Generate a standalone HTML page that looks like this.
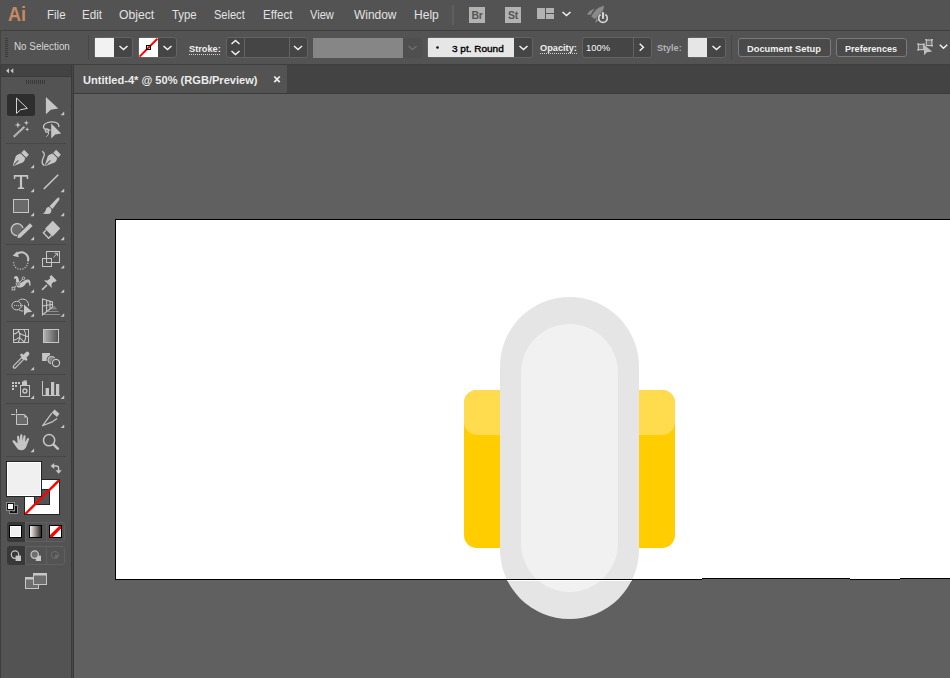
<!DOCTYPE html>
<html>
<head>
<meta charset="utf-8">
<title>Untitled-4* @ 50% (RGB/Preview)</title>
<style>
*{box-sizing:border-box;margin:0;padding:0}
html,body{width:950px;height:678px;overflow:hidden;background:#535353;font-family:"Liberation Sans",sans-serif;color:#dcdcdc}
.abs{position:absolute}
#app{position:relative;width:950px;height:678px;overflow:hidden;background:#535353}
/* menu bar */
#menubar{left:0;top:0;width:950px;height:30px;background:#535353}
.mi{position:absolute;transform-origin:0 0;top:7px;font-size:13px;line-height:16px;color:#e2e2e2;white-space:nowrap}
#ailogo{left:8px;top:2px;font-size:20.5px;line-height:24px;font-weight:bold;color:#c98a63;transform-origin:0 0;transform:scaleX(0.88)}
/* control bar */
#ctrl{left:0;top:30px;width:950px;height:35px;background:#535353;border-top:1px solid #3e3e3e;border-bottom:1px solid #3f3f3f;border-left:1px solid #444}
.ct{position:absolute;font-size:10px;line-height:13px;color:#e0e0e0;white-space:nowrap}
/* tab strip */
#tabstrip{left:72px;top:65px;width:878px;height:29px;background:#434343;border-bottom:1px solid #3a3a3a}
#tab{left:74px;top:65px;width:213px;height:28px;background:#535353}
#tabtxt{top:73px;font-size:11px;line-height:14px;font-weight:bold;color:#ececec;white-space:nowrap}
/* canvas */
#canvas{left:74px;top:94px;width:876px;height:584px;background:#606060;overflow:hidden}
/* toolbar */
#tbhead{left:0;top:65px;width:71px;height:12px;background:#434343;border-bottom:1px solid #3b3b3b}
#tb{left:0;top:77px;width:72px;height:601px;background:#535353}
#tbsep{left:71px;top:65px;width:3px;height:613px;background:linear-gradient(to right,#3a3a3a 0,#3a3a3a 1px,#474747 1px,#474747 2px,#3a3a3a 2px,#3a3a3a 3px)}

/* control widgets */
.grp{position:absolute;top:37px;height:21px;border:1px solid #636363;border-radius:3px;background:#454545;overflow:hidden}
.sw{position:absolute;top:38px;height:19px}
.chev{position:absolute;width:9px;height:6px}
.lbl{position:absolute;top:41px;font-size:9.6px;line-height:13px;font-weight:bold;color:#efefef;white-space:nowrap}
.btn{position:absolute;top:38px;height:19px;border:1px solid #7b7b7b;border-radius:3px;background:#4a4a4a;font-size:10.5px;line-height:17px;font-weight:bold;color:#f0f0f0;text-align:center;white-space:nowrap}
.bt{position:absolute;top:42px;font-size:9.6px;line-height:13px;font-weight:bold;color:#f0f0f0;white-space:nowrap}
.vsep{position:absolute;width:1px;background:#444}
.appbox{position:absolute;top:7px;width:16px;height:16px;background:#b2b2b2;color:#555;font-size:10.5px;line-height:16px;font-weight:bold;text-align:center;letter-spacing:-0.3px}
</style>
</head>
<body>
<div id="app">
  <div id="menubar" class="abs">
    <div id="ailogo" class="abs">Ai</div>
    <div class="mi" style="left:47.1px;transform:scaleX(0.885)">File</div>
    <div class="mi" style="left:82.2px;transform:scaleX(0.895)">Edit</div>
    <div class="mi" style="left:118.8px;transform:scaleX(0.935)">Object</div>
    <div class="mi" style="left:171.5px;transform:scaleX(0.876)">Type</div>
    <div class="mi" style="left:213.9px;transform:scaleX(0.850)">Select</div>
    <div class="mi" style="left:263.0px;transform:scaleX(0.893)">Effect</div>
    <div class="mi" style="left:310.1px;transform:scaleX(0.855)">View</div>
    <div class="mi" style="left:353.7px;transform:scaleX(0.919)">Window</div>
    <div class="mi" style="left:414.1px;transform:scaleX(0.927)">Help</div>
  </div>
  <div id="ctrl" class="abs"></div>
  <!-- control bar widgets -->
  <svg class="abs" style="left:0;top:0" width="950" height="64" viewBox="0 0 950 64">
    <!-- menubar separator and app icons -->
    <rect x="452" y="5" width="2" height="20" fill="#5f5f5f"/>
    <g fill="#b2b2b2">
      <rect x="537" y="8" width="8" height="11"/>
      <rect x="546" y="8" width="8" height="5"/>
      <rect x="546" y="14" width="8" height="5"/>
    </g>
    <path d="M562.5 12 L566.5 15.5 L570.5 12" fill="none" stroke="#f0f0f0" stroke-width="1.6"/>
    <!-- rocket -->
    <g fill="#8b8b8b">
      <path d="M604.1 5.8 C599 6.6 594.4 10.4 591.4 16.4 L594.6 18.9 C600 16.2 603.6 11.6 604.1 5.8 Z"/>
      <path d="M594.8 8.8 C591.4 9.6 588.6 11.6 586.9 14.4 L590.9 14.7 C591.8 12.4 593 10.6 594.8 8.8 Z"/>
      <path d="M596.4 18.4 L595 23 C597 22.2 598.6 20.4 599 17.6 Z"/>
    </g>
    <circle cx="603" cy="18.1" r="5.6" fill="#535353"/>
    <path d="M600.6 14.5 A4.3 4.3 0 1 0 605.4 14.5" fill="none" stroke="#d6d6d6" stroke-width="1.6"/>
    <rect x="601.3" y="11.6" width="3.4" height="7.8" fill="#535353"/>
    <rect x="601.9" y="12.2" width="2.2" height="6.6" fill="#d6d6d6"/>
    <!-- grip -->
    <g fill="#3b3b3b">
      <rect x="5" y="38" width="3" height="1"/><rect x="5" y="40" width="3" height="1"/><rect x="5" y="42" width="3" height="1"/><rect x="5" y="44" width="3" height="1"/><rect x="5" y="46" width="3" height="1"/><rect x="5" y="48" width="3" height="1"/><rect x="5" y="50" width="3" height="1"/><rect x="5" y="52" width="3" height="1"/><rect x="5" y="54" width="3" height="1"/><rect x="5" y="56" width="3" height="1"/>
    </g>
    <rect x="88" y="35" width="1" height="25" fill="#474747"/>
    <rect x="731" y="35" width="1" height="25" fill="#474747"/>
  </svg>
  <div class="appbox" style="left:469px">Br</div>
  <div class="appbox" style="left:505px">St</div>
  <div class="ct" style="left:14.2px;top:40px;color:#d6d6d6;transform-origin:0 0;transform:scaleX(0.985)">No Selection</div>
  <!-- fill -->
  <div class="grp" style="left:94px;width:39px"></div>
  <div class="sw" style="left:95px;width:19px;background:#f2f2f2"></div>
  <!-- stroke -->
  <div class="grp" style="left:138px;width:39px"></div>
  <div class="sw" style="left:139px;width:19px;background:#fff"></div>
  <div class="lbl" style="left:188.5px;transform-origin:0 0;transform:scaleX(0.960);top:42px">Stroke:</div>
  <div class="grp" style="left:226px;width:82px"></div>
  <!-- variable width (disabled) -->
  <div class="sw" style="left:313px;width:90px;top:38px;height:20px;background:#868686"></div>
  <div class="sw" style="left:403px;width:19px;top:38px;height:20px;background:#4f4f4f"></div>
  <!-- brush -->
  <div class="grp" style="left:427px;width:106px"></div>
  <div class="sw" style="left:428px;width:86px;background:#e6e6e6"></div>
  <div class="ct" style="left:452.0px;top:42px;color:#000;-webkit-text-stroke:0.35px #000;font-weight:normal;transform-origin:0 0;transform:scaleX(1.043);font-size:9.6px">3 pt. Round</div>
  <div class="lbl" style="left:539.7px;transform-origin:0 0;transform:scaleX(0.960);top:41px">Opacity:</div>
  <div class="grp" style="left:582px;width:70px"></div>
  <div class="ct" style="left:585.7px;top:41px;color:#f8f8f8;transform-origin:0 0;transform:scaleX(0.980);font-size:9.6px">100%</div>
  <div class="ct" style="left:657.1px;top:41px;color:#b4b4b4;font-weight:bold;transform-origin:0 0;transform:scaleX(0.944);font-size:9.6px">Style:</div>
  <div class="grp" style="left:687px;width:39px"></div>
  <div class="sw" style="left:688px;width:19px;background:#e6e6e6"></div>
  <div class="btn" style="left:738px;width:93px"></div>
  <div class="bt" style="left:747.4px;transform-origin:0 0;transform:scaleX(0.969)">Document Setup</div>
  <div class="btn" style="left:836px;width:71px"></div>
  <div class="bt" style="left:845.3px;transform-origin:0 0;transform:scaleX(0.948)">Preferences</div>
  <svg class="abs" style="left:0;top:30px" width="950" height="34" viewBox="0 30 950 34">
    <g fill="none" stroke="#f2f2f2" stroke-width="1.5">
      <path d="M119.5 46 L123.5 49.5 L127.5 46"/>
      <path d="M163.5 46 L167.5 49.5 L171.5 46"/>
      <path d="M231.5 44 L235.5 40.5 L239.5 44"/>
      <path d="M231.5 51 L235.5 54.5 L239.5 51"/>
      <path d="M294 46 L298 49.5 L302 46"/>
      <path d="M519.5 46 L523.5 49.5 L527.5 46"/>
      <path d="M639.7 43.8 L643.4 47.3 L639.7 50.8"/>
      <path d="M712.5 46 L716.5 49.5 L720.5 46"/>
      <path d="M939.8 44.8 L943.5 48.2 L947.2 44.8"/>
    </g>
    <path d="M408.5 46 L412.5 49.5 L416.5 46" fill="none" stroke="#6e6e6e" stroke-width="1.5"/>
    <path d="M189 54.5 H220" stroke="#d2d2d2" stroke-width="1" stroke-dasharray="1 1"/>
    <path d="M540 53.5 H577" stroke="#d2d2d2" stroke-width="1" stroke-dasharray="1 1"/>
    <!-- stroke none swatch -->
    <path d="M139.6 56.6 L157.4 38.8" stroke="#ff0000" stroke-width="2"/>
    <rect x="146.5" y="45.5" width="4" height="4" fill="none" stroke="#000" stroke-width="1"/>
    <!-- spinner/field dividers -->
    <rect x="244" y="38" width="1" height="19" fill="#636363"/>
    <rect x="289" y="38" width="1" height="19" fill="#636363"/>
    <rect x="633" y="38" width="1" height="19" fill="#636363"/>
    <circle cx="437.5" cy="47.5" r="1.3" fill="#111"/>
    <!-- selection icon -->
    <g fill="#6e6e6e" stroke="#d0d0d0" stroke-width="1">
      <rect x="918.3" y="44.3" width="5.4" height="5.4"/>
      <rect x="926.3" y="40" width="5.6" height="5.6"/>
    </g>
    <g fill="#d0d0d0">
      <rect x="917.3" y="43.3" width="1.4" height="1.4"/><rect x="923.3" y="43.3" width="1.4" height="1.4"/><rect x="917.3" y="49.3" width="1.4" height="1.4"/>
      <rect x="925.3" y="39" width="1.4" height="1.4"/><rect x="931.5" y="39" width="1.4" height="1.4"/><rect x="931.5" y="45.2" width="1.4" height="1.4"/>
    </g>
    <path d="M924 44.8 L924 55.3 L927 52.2 L932.2 51.4 Z" fill="#bdbdbd"/>
  </svg>
  <div id="tabstrip" class="abs"></div>
  <div id="tab" class="abs"></div>
  <div id="tabtxt" class="abs" style="left:83.2px;transform-origin:0 0;transform:scaleX(1.007)">Untitled-4* @ 50% (RGB/Preview)</div>
  <svg class="abs" style="left:270px;top:72px" width="14" height="14" viewBox="270 72 14 14"><path d="M274.3 76.5 L279.7 82.1 M279.7 76.5 L274.3 82.1" stroke="#ededed" stroke-width="1.8" fill="none"/></svg>
  <div id="canvas" class="abs">
    <svg class="abs" style="left:0;top:0" width="876" height="584" viewBox="74 94 876 584">
      <rect x="115.5" y="219.5" width="840" height="360" fill="#ffffff" stroke="#000000" stroke-width="1"/>
      <rect x="464" y="390" width="211" height="158" rx="13" fill="#ffcd00"/>
      <rect x="464" y="390" width="211" height="45" rx="13" fill="#ffdb4d"/>
      <rect x="500" y="297" width="139" height="322" rx="69.5" fill="#e5e5e5"/>
      <rect x="521" y="324" width="97" height="268" rx="48.5" fill="#f1f1f1"/>
      <rect x="115" y="579" width="587" height="1" fill="#000"/>
      <rect x="702" y="578" width="148" height="1" fill="#000"/>
      <rect x="850" y="579" width="50" height="1" fill="#000"/>
      <rect x="900" y="578" width="50" height="1" fill="#000"/>
      <rect x="702" y="579" width="148" height="1" fill="#606060"/>
      <rect x="900" y="579" width="50" height="1" fill="#606060"/>
      <rect x="507" y="580" width="125" height="1" fill="#ffffff"/>
    </svg>
  </div>
  <div id="tbhead" class="abs"></div>
  <div id="tb" class="abs"></div>
  <div id="tbsep" class="abs"></div>
  <svg id="tbsvg" class="abs" style="left:0;top:65px" width="74" height="613" viewBox="0 65 74 613">
    <style>.f{fill:#c6c6c6}.s{fill:none;stroke:#c6c6c6;stroke-width:1}.s15{fill:none;stroke:#c6c6c6;stroke-width:1.5}.s2{fill:none;stroke:#c6c6c6;stroke-width:2}.d{fill:#6a6a6a;stroke:#c6c6c6;stroke-width:1}</style>
    <rect x="0" y="65" width="1" height="613" fill="#3e3e3e"/>
    <!-- collapse chevrons -->
    <path class="f" d="M9 68.3 L9 73.3 L6 70.8 Z M13.3 68.3 L13.3 73.3 L10.3 70.8 Z"/>
    <rect x="6" y="143" width="60" height="1" fill="#474747"/><rect x="6" y="244" width="60" height="1" fill="#474747"/><rect x="6" y="321" width="60" height="1" fill="#474747"/><rect x="6" y="374" width="60" height="1" fill="#474747"/><rect x="6" y="403" width="60" height="1" fill="#474747"/><rect x="6" y="456" width="60" height="1" fill="#474747"/>
    <rect x="26" y="80" width="1" height="4" fill="#3a3a3a"/><rect x="28" y="80" width="1" height="4" fill="#3a3a3a"/><rect x="30" y="80" width="1" height="4" fill="#3a3a3a"/><rect x="32" y="80" width="1" height="4" fill="#3a3a3a"/><rect x="34" y="80" width="1" height="4" fill="#3a3a3a"/><rect x="36" y="80" width="1" height="4" fill="#3a3a3a"/><rect x="38" y="80" width="1" height="4" fill="#3a3a3a"/><rect x="40" y="80" width="1" height="4" fill="#3a3a3a"/><rect x="42" y="80" width="1" height="4" fill="#3a3a3a"/><rect x="44" y="80" width="1" height="4" fill="#3a3a3a"/>
    <path class="f" d="M64.2 115.2 h-3.6 l3.6 -3.6 Z M34.1 168.2 h-3.6 l3.6 -3.6 Z M34.1 192.2 h-3.6 l3.6 -3.6 Z M64.2 192.2 h-3.6 l3.6 -3.6 Z M34.1 216.2 h-3.6 l3.6 -3.6 Z M64.2 216.2 h-3.6 l3.6 -3.6 Z M34.1 240.2 h-3.6 l3.6 -3.6 Z M64.2 240.2 h-3.6 l3.6 -3.6 Z M34.1 268.6 h-3.6 l3.6 -3.6 Z M64.2 268.6 h-3.6 l3.6 -3.6 Z M34.1 292.8 h-3.6 l3.6 -3.6 Z M64.2 292.8 h-3.6 l3.6 -3.6 Z M34.1 316.8 h-3.6 l3.6 -3.6 Z M64.2 316.8 h-3.6 l3.6 -3.6 Z M34.1 370.3 h-3.6 l3.6 -3.6 Z M34.1 398.9 h-3.6 l3.6 -3.6 Z M64.2 398.9 h-3.6 l3.6 -3.6 Z M64.2 428.1 h-3.6 l3.6 -3.6 Z M34.1 452.2 h-3.6 l3.6 -3.6 Z"/>
    <!-- row 1: selection (active) / direct selection -->
    <rect x="7" y="94" width="28" height="22" rx="2.5" fill="#2e2e2e"/>
    <path d="M16.5 98 L16.5 113.4 L20.6 109.7 L27.4 108.4 Z" fill="none" stroke="#d4d4d4" stroke-width="1" stroke-linejoin="miter"/>
    <path class="f" d="M45.9 97 L45.9 114.2 L50.8 109.7 L58.3 108.4 Z"/>
    <!-- row 2: magic wand / lasso -->
    <path d="M13.8 136.7 L24.4 126.8" stroke="#c6c6c6" stroke-width="2.1" stroke-dasharray="1.7 0.3" fill="none"/>
    <path class="f" d="M17.9 121.8 L18.7 124.2 L21.2 125 L18.7 125.8 L17.9 128.2 L17.1 125.8 L14.6 125 L17.1 124.2 Z"/>
    <path class="f" d="M26.3 120.2 L27 122.2 L29 122.8 L27 123.5 L26.3 125.5 L25.6 123.5 L23.6 122.8 L25.6 122.2 Z"/>
    <path class="f" d="M27.2 127.2 L27.8 128.7 L29.3 129.3 L27.8 129.9 L27.2 131.4 L26.6 129.9 L25.1 129.3 L26.6 128.7 Z"/>
    <path d="M50.5 130.2 C45 130.4 42.8 128.2 43.6 125.8 C44.6 122.6 50 121.4 54.4 122.2 C57.8 122.8 59.6 124.8 58.6 127" fill="none" stroke="#c6c6c6" stroke-width="1.3"/>
    <circle cx="46.9" cy="130.6" r="1.7" fill="none" stroke="#c6c6c6" stroke-width="1.2"/>
    <path class="s" d="M48.3 131.8 C49 133.6 48.2 135.6 46.2 136.6"/>
    <path class="f" d="M51.2 123.6 L51.2 138.4 L55.2 134.4 L61.2 133.6 Z"/>
    <!-- row 3: pen / curvature -->
    <g id="pen">
      <path class="f" stroke="#c6c6c6" stroke-width="0.8" stroke-linejoin="round" d="M24.2 150.3 L28.5 154.8 L26.1 157.2 L21.7 152.7 Z"/>
      <path class="f" d="M20.7 153.5 L25.2 158 C24.8 160 24 161.6 22.7 162.6 L14.2 165.8 C13.3 166 12.8 165.4 13 164.6 L15.9 156.1 C16.9 154.9 18.6 154 20.7 153.5 Z"/>
      <path d="M13.9 164.8 L18.4 160.4" stroke="#535353" stroke-width="1.1" fill="none"/>
    </g>
    <g transform="translate(32 0)">
      <path class="f" stroke="#c6c6c6" stroke-width="0.8" stroke-linejoin="round" d="M24.2 150.3 L28.5 154.8 L26.1 157.2 L21.7 152.7 Z"/>
      <path class="f" d="M20.7 153.5 L25.2 158 C24.8 160 24 161.6 22.7 162.6 L14.2 165.8 C13.3 166 12.8 165.4 13 164.6 L15.9 156.1 C16.9 154.9 18.6 154 20.7 153.5 Z"/>
      <path d="M13.9 164.8 L18.4 160.4" stroke="#535353" stroke-width="1.1" fill="none"/>
    </g>
    <path d="M42.1 151.4 C44.6 152.6 44.8 154.6 43.6 157 C42.2 159.8 40.6 163.6 44.4 165.6" fill="none" stroke="#c6c6c6" stroke-width="1.3"/>
    <!-- row 4: type / line -->
    <path class="f" d="M13.8 175 H28.2 V179 H26.7 V176.7 H22.1 V187.6 H24.1 V189.1 H17.9 V187.6 H19.9 V176.7 H15.3 V179 H13.8 Z"/>
    <path d="M43.8 189 L58.2 174.8" stroke="#c6c6c6" stroke-width="1.6" fill="none"/>
    <!-- row 5: rectangle / paintbrush -->
    <rect class="d" x="13.5" y="199.5" width="15" height="13"/>
    <path class="f" d="M58.9 197.6 Q59.9 198.6 59.2 200 L52.4 208.9 L49.5 206.3 L57.2 198.2 Q58 197.4 58.9 197.6 Z"/>
    <path class="f" d="M48.9 207.1 C50.2 207.5 51.2 208.8 51.4 210.2 C51.5 212.4 50 213.8 48 213.9 L42.7 213.8 C44.6 213 45.4 211.4 45.8 209.8 C46.2 208 47.5 206.8 48.9 207.1 Z"/>
    <!-- row 6: shaper / eraser -->
    <path d="M23 228 A6 6 0 1 0 17.5 235.6" fill="#6a6a6a" stroke="#c6c6c6" stroke-width="1.4"/>
    <path d="M23 228 L17.5 235.6 L21 231 Z" fill="#6a6a6a"/>
    <path d="M30 223.2 L32.6 226 L20.6 237.4 L17.5 238.2 L17.9 235 Z" fill="#c6c6c6" stroke="#535353" stroke-width="0.9" paint-order="stroke"/>
    <path class="f" d="M52.7 220.8 L60.2 228.6 L52.6 236.4 L45 228.7 Z"/>
    <path d="M46 230.2 L43.4 232.8 L48.6 238.2 L51.4 235.4" fill="none" stroke="#c6c6c6" stroke-width="1.4"/>
    <!-- row 7: rotate / scale -->
    <path class="s2" d="M17 254 A6.8 6.8 0 0 1 27.9 261.2" />
    <path class="f" d="M12.7 255.8 L17.2 251.3 L18.8 257.3 Z"/>
    <path d="M27.7 262.8 A6.8 6.8 0 0 1 13.6 261.6" fill="none" stroke="#c6c6c6" stroke-width="1.4" stroke-dasharray="1 1.55"/>
    <rect class="s" x="46.5" y="251.5" width="13" height="11"/>
    <rect class="s" x="42.5" y="258.5" width="9" height="8"/>
    <path class="s" d="M53.4 257.4 L57.4 253.4 M54.6 253.2 H57.6 V256.2"/>
    <!-- row 8: width / puppet pin -->
    <path class="f" d="M14 279 C13.6 277 14.8 276 16 276.1 C17.6 276.2 18.4 277.4 18.8 279.4 C19 280.6 19.2 281.6 19.8 282.4 C21 283.4 22.8 281.6 24.4 280.6 C26 279.6 27.4 279.2 28.6 279.6 C30.4 280.4 30.8 282.6 30.4 285.8 L29.4 285.9 C29.2 283.8 28.8 282.4 27.8 282.2 C26.6 282.2 25.8 283.8 24.6 285.2 C23 287 20.6 288 18.2 287.4 C16.2 286.8 15.6 285 15.8 283 C16 281.2 16.4 279.6 15.6 278.6 C15.2 278.2 14.6 278.4 14 279 Z"/>
    <path d="M13.6 288.4 L23.4 278.4" stroke="#c6c6c6" stroke-width="1" fill="none"/>
    <circle cx="17.8" cy="284" r="2.1" fill="#535353"/>
    <rect x="12.1" y="287.2" width="2.7" height="2.7" fill="#535353" stroke="#c6c6c6" stroke-width="0.9"/>
    <circle cx="17.8" cy="284" r="1.3" fill="#535353" stroke="#c6c6c6" stroke-width="0.9"/>
    <circle cx="23.5" cy="278.3" r="1.35" fill="#535353" stroke="#c6c6c6" stroke-width="0.9"/>
    <path class="f" d="M51.3 275.1 L56.7 280.5 L54.6 282.2 L53.4 281.8 L51.4 284.6 L51.9 288 L44 280.2 L47.4 280.6 L50.2 278.6 L49.8 277.4 L49.6 276.8 Z"/>
    <path d="M46.6 285.4 L42.5 289.4" stroke="#c6c6c6" stroke-width="1.5" stroke-linecap="round" fill="none"/>
    <!-- row 9: shape builder / perspective grid -->
    <path class="s" d="M28.5 306 A6 6 0 1 0 23.4 311"/>
    <ellipse cx="16.6" cy="305.6" rx="4.7" ry="4.3" fill="#535353" stroke="#c6c6c6" stroke-width="1"/>
    <path d="M14 305.6 H23.6" stroke="#c6c6c6" stroke-width="1" stroke-dasharray="1 1" fill="none"/>
    <path class="f" d="M24 304.6 L24 315.4 L27 312.6 L32.2 311.8 Z"/>
    <path d="M44 314.5 H60.2 M48 311.5 H58.5" stroke="#8e8e8e" stroke-width="1" fill="none"/>
    <path d="M54.5 305.8 L57.2 309.6 L50.6 309.6 Z" fill="#808080"/>
    <path fill="none" stroke="#c6c6c6" stroke-width="1.15" d="M42.5 299 V314.8 L52.5 307.2 V302 Z M42.5 306 L52.5 304.4 M46.6 300.2 V311.6 M50 301.2 V309"/>
    <!-- row 10: mesh / gradient -->
    <rect class="s" x="13.5" y="329.5" width="15" height="13"/>
    <path d="M23.9 329.5 C26.3 333 26.3 339 23.9 342.5 M18.2 329.5 C20.2 333.5 20.2 338.5 18.2 342.5 M13.5 334.3 C15.5 333.8 17.4 332.8 18.8 331.2 M13.5 340.4 C15.6 339.8 17.6 338.8 19.2 337.4 M19.6 333.2 C21.6 334.2 23.6 335.2 25.6 336 M19.4 337.6 C21 338.8 22.6 340.2 23.9 341.8 M25.7 336.4 H28.5" stroke="#c6c6c6" stroke-width="1.1" fill="none"/>
    <defs><linearGradient id="gr1" x1="0" x2="1" y1="0" y2="0"><stop offset="0" stop-color="#b4b4b4"/><stop offset="1" stop-color="#505050"/></linearGradient>
    <linearGradient id="gr2" x1="0" x2="1" y1="0" y2="0"><stop offset="0" stop-color="#ffffff"/><stop offset="1" stop-color="#2a1f1a"/></linearGradient></defs>
    <rect x="43.5" y="329.5" width="15" height="13" fill="url(#gr1)" stroke="#c6c6c6" stroke-width="1"/>
    <!-- row 11: eyedropper / blend -->
    <path d="M22.8 358.4 L14.5 366.8" stroke="#c6c6c6" stroke-width="3.8" stroke-linecap="round" fill="none"/>
    <path d="M22.6 358.6 L14.7 366.6" stroke="#535353" stroke-width="1.5" stroke-linecap="round" fill="none"/>
    <path d="M21.2 360 L18.2 363" stroke="#707070" stroke-width="1.5" fill="none"/>
    <path d="M27.3 353.7 L23.6 357.4" stroke="#c6c6c6" stroke-width="4.2" stroke-linecap="round" fill="none"/>
    <path d="M21.6 355 L26 359.2" stroke="#c6c6c6" stroke-width="2.8" stroke-linecap="round" fill="none"/>
    <rect class="f" x="42.1" y="353" width="7.9" height="8"/>
    <circle cx="51.6" cy="360" r="5" fill="#535353"/>
    <circle cx="51.6" cy="360" r="3.7" fill="#8a8a8a" stroke="#c6c6c6" stroke-width="1"/>
    <circle cx="56" cy="363" r="5" fill="#535353"/>
    <circle cx="56" cy="363" r="3.6" fill="#535353" stroke="#c6c6c6" stroke-width="1.2"/>
    <!-- row 12: symbol sprayer / graph -->
    <rect class="s" x="20.5" y="385.5" width="9" height="11"/>
    <rect class="f" x="22" y="381.4" width="5" height="4"/>
    <rect class="f" x="23.6" y="380.4" width="3" height="1.4"/>
    <circle cx="24.9" cy="391" r="2" fill="none" stroke="#c6c6c6" stroke-width="1.4"/>
    <path class="f" d="M12 382 h2 v2 h-2 Z M15 382 h2 v2 h-2 Z M18 382 h2 v2 h-2 Z M12 385 h2 v2 h-2 Z M15 385 h2 v2 h-2 Z M12 388 h2 v2 h-2 Z"/>
    <path class="s" d="M42.5 381 V395.5 H60"/>
    <rect class="f" x="45.6" y="388" width="3.4" height="7"/>
    <rect class="f" x="51" y="382" width="3.2" height="13"/>
    <rect class="f" x="56" y="384" width="3.2" height="11"/>
    <!-- row 13: artboard / slice -->
    <path class="s" d="M16.5 409 V413.4 M11 414.5 H15.4"/>
    <path class="d" d="M16.5 414.5 H24.6 L27.5 417.4 V424.5 H16.5 Z"/>
    <path class="f" d="M24.4 414.4 V417.6 H27.6 Z"/>
    <path class="f" d="M54.6 409.4 L59.4 413.8 L57 417 L51.8 412.4 Z"/>
    <path d="M51.8 413.2 L42.5 425.8 L52.8 421.6 L57 418.4" fill="none" stroke="#c6c6c6" stroke-width="1.2" stroke-linejoin="round"/>
    <!-- row 14: hand / zoom -->
    <path class="f" d="M17 436.4 C17.6 435.2 19 435.6 19.2 436.8 L19.8 441 L20.2 435.2 C20.4 433.8 22.2 433.8 22.4 435.2 L22.6 441 L23.6 436 C24 434.8 25.6 435.2 25.6 436.4 L25.2 442 L27.2 438.6 C27.8 437.6 29.4 438.2 29 439.6 L26.6 446 C25.8 448.6 24 450.2 21.4 450.2 C19 450.2 17.6 449 16.4 447.2 L12.6 441.8 C12 440.6 13.4 439.8 14.4 440.6 L17.6 443.6 Z"/>
    <circle class="s15" cx="49.1" cy="440.2" r="5.6"/>
    <path d="M53.6 444.6 L57.8 448.6" stroke="#c6c6c6" stroke-width="2.6" stroke-linecap="round" fill="none"/>
    <!-- fill / stroke swatches -->
    <rect x="24.5" y="479.5" width="35" height="35" fill="#ffffff" stroke="#242424" stroke-width="1"/>
    <rect x="34.5" y="489.5" width="15" height="15" fill="#535353" stroke="#242424" stroke-width="1"/>
    <path d="M25.4 514 L59 480.4" stroke="#ff0000" stroke-width="2.4" fill="none"/>
    <rect x="6.5" y="461.5" width="35" height="35" fill="#ffffff" stroke="#242424" stroke-width="1"/>
    <rect x="8" y="463" width="32" height="32" fill="#f0f0f0"/>
    <!-- swap arrow -->
    <path d="M53 466 H56.4 C57.8 466 58.6 466.8 58.6 468.2 V471" fill="none" stroke="#c6c6c6" stroke-width="1.4"/>
    <path class="f" d="M50.6 466 L54.2 462.9 V469.1 Z M58.6 473.8 L55.5 470.2 H61.7 Z"/>
    <!-- default colours -->
    <rect x="9.5" y="505.5" width="8" height="8" fill="#111" stroke="#8a8a8a" stroke-width="1"/>
    <path d="M12.5 510.8 H14.6 V508.6" fill="none" stroke="#d8d8d8" stroke-width="1"/>
    <rect x="6.5" y="502.5" width="8" height="8" fill="#111" stroke="#8a8a8a" stroke-width="1"/>
    <rect x="8" y="504" width="5" height="5" fill="#ffffff"/>
    <!-- colour mode group -->
    <rect x="7.5" y="522.5" width="57" height="19" rx="2.5" fill="#535353" stroke="#606060" stroke-width="1"/>
    <path d="M10 522 H25 V542 H10 Q7 542 7 539 V525 Q7 522 10 522 Z" fill="#383838"/>
    <rect x="25" y="523" width="1" height="18" fill="#606060"/><rect x="46" y="523" width="1" height="18" fill="#606060"/>
    <rect x="9.5" y="525.5" width="12" height="12" fill="#ffffff" stroke="#000" stroke-width="1"/>
    <rect x="11" y="527" width="9" height="9" fill="#f0f0f0"/>
    <rect x="29.5" y="525.5" width="12" height="12" fill="url(#gr2)" stroke="#000" stroke-width="1"/>
    <rect x="49.5" y="525.5" width="12" height="12" fill="#ffffff" stroke="#000" stroke-width="1"/>
    <path d="M50.4 537 L61 526.4" stroke="#ff0000" stroke-width="3.2" fill="none"/>
    <rect x="49.5" y="525.5" width="12" height="12" fill="none" stroke="#000" stroke-width="1"/>
    <!-- draw mode group -->
    <rect x="7.5" y="546.5" width="57" height="18" rx="2.5" fill="#535353" stroke="#606060" stroke-width="1"/>
    <path d="M10 546 H25 V565 H10 Q7 565 7 562 V549 Q7 546 10 546 Z" fill="#383838"/>
    <rect x="25" y="547" width="1" height="17" fill="#606060"/><rect x="46" y="547" width="1" height="17" fill="#606060"/>
    <circle cx="15" cy="554.6" r="3.7" fill="#383838" stroke="#c6c6c6" stroke-width="1.2"/>
    <rect class="f" x="15.6" y="555.6" width="5.4" height="5.4"/>
    <rect class="f" x="35.8" y="555.6" width="5.2" height="5.4"/>
    <circle cx="34.7" cy="554.6" r="3.7" fill="#6e6e6e" stroke="#c6c6c6" stroke-width="1.2"/>
    <circle cx="54.8" cy="555" r="3.6" fill="none" stroke="#6c6c6c" stroke-width="1"/>
    <path d="M54.8 555 H58.2 A3.4 3.4 0 0 1 54.8 558.4 Z" fill="#6c6c6c"/>
    <!-- screen mode -->
    <rect x="25.5" y="577.5" width="13" height="11" fill="#6e6e6e" stroke="#c6c6c6" stroke-width="1"/>
    <rect x="25.5" y="577.5" width="13" height="2" fill="#c6c6c6"/>
    <rect x="33.5" y="573.5" width="13" height="11" fill="#6e6e6e" stroke="#c6c6c6" stroke-width="1"/>
    <rect x="33.5" y="573.5" width="13" height="2" fill="#c6c6c6"/>
  </svg>
</div>
</body>
</html>
